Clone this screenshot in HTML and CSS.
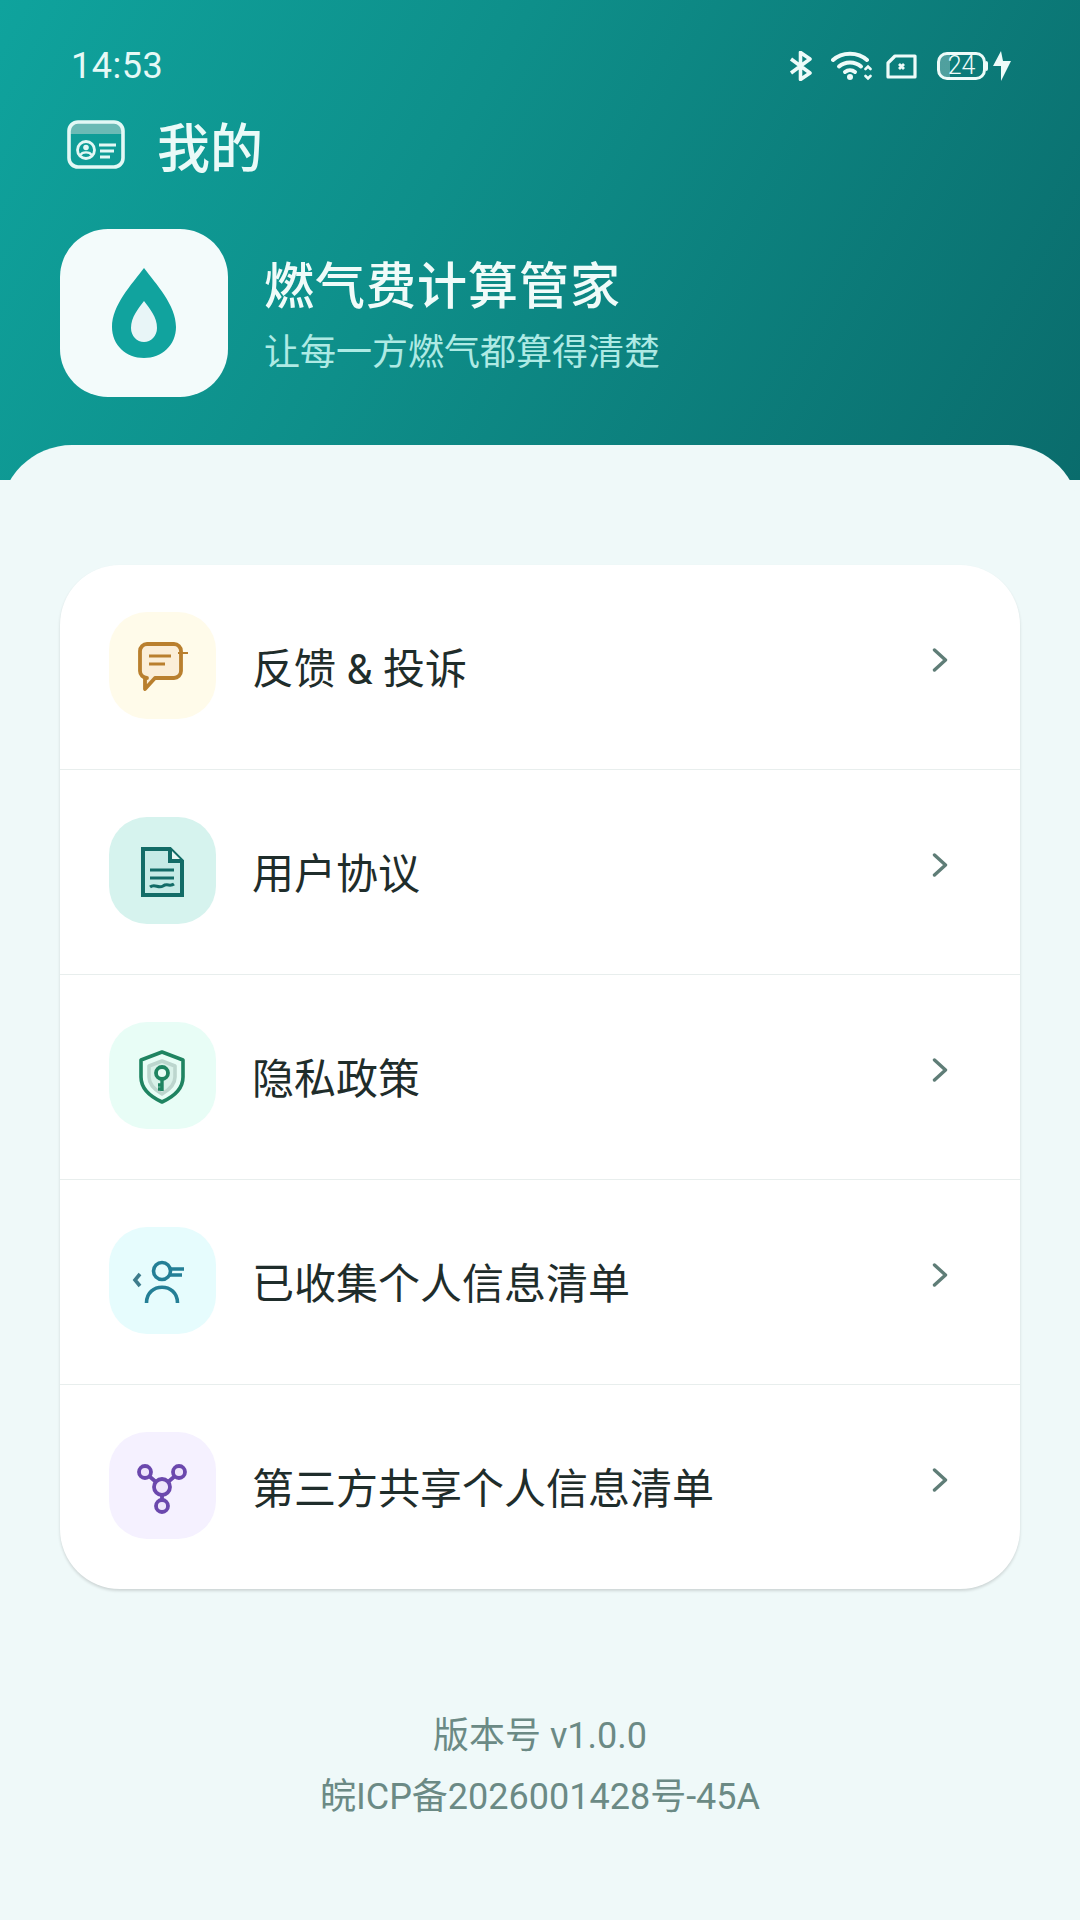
FILE: index.html
```html
<!DOCTYPE html>
<html lang="zh-CN">
<head>
    <meta charset="UTF-8">
    <meta name="viewport" content="width=device-width, initial-scale=1.0">
    <title>我的</title>
    <link rel="stylesheet" href="styles.css">
</head>
<body>
    <header class="header">
        <div class="status-bar">
            <span class="time">14:53</span>
            <div class="status-icons">
                <svg class="icon-bt" width="24" height="30" viewBox="0 0 24 30" fill="none" stroke="#eefbf9" stroke-width="3.6" stroke-linejoin="round"><path d="M2 8 L21 22 L11.5 28.5 V1.5 L21 8 L2 22"/></svg>
                <svg class="icon-wifi" width="41" height="30" viewBox="0 0 41 30" fill="none" stroke="#eefbf9" stroke-width="4" stroke-linecap="round"><path d="M2 9 C11 0.5 27 0.5 36 9"/><path d="M8 15.5 C14 10 24 10 30 15.5"/><path d="M14 21 C17 18.5 21 18.5 24 21"/><circle cx="19" cy="26" r="3" fill="#eefbf9" stroke="none"/><path d="M34.5 18 L37 15.5 L39.5 18 M34.5 25 L37 27.5 L39.5 25" stroke-width="2.6"/></svg>
                <svg class="icon-sim" width="31" height="25" viewBox="0 0 31 25" fill="none" stroke="#eefbf9" stroke-width="3.2"><path d="M9 2 H29 V23 H2 V9 Z" stroke-linejoin="round"/><path d="M13 10 L18 15 M18 10 L13 15" stroke-width="2.8"/></svg>
                <div class="battery"><span>24</span></div>
                <svg class="icon-bolt" width="18" height="30" viewBox="0 0 18 30" fill="#eefbf9"><path d="M8 0 L0 15 H8 V30 L18 10 H10 Z"/></svg>
            </div>
        </div>

        <div class="title-row">
            <svg width="58" height="49" viewBox="0 0 58 49" fill="none">
                <path d="M2 14 V10 A8 8 0 0 1 10 2 H48 A8 8 0 0 1 56 10 V14 Z" fill="#6bbab5"/>
                <rect x="2" y="2" width="54" height="45" rx="9" stroke="#e3f8f5" stroke-width="3.6"/>
                <circle cx="19" cy="30" r="8.5" stroke="#e3f8f5" stroke-width="2.8"/>
                <circle cx="19" cy="27.5" r="2.8" fill="#e3f8f5"/>
                <path d="M13.5 35 C15 31.5 23 31.5 24.5 35" stroke="#e3f8f5" stroke-width="2.4"/>
                <path d="M32 25 H49 M33 31 H47 M33 37 H43" stroke="#e3f8f5" stroke-width="2.8"/>
            </svg>
            <h1 class="page-title">我的</h1>
        </div>

        <div class="brand">
            <div class="brand-logo">
                <svg width="64" height="92" viewBox="0 0 64 92">
                    <path d="M32 1 C44 17 64 38 64 60 C64 78 50 91 32 91 C14 91 0 78 0 60 C0 38 20 17 32 1 Z" fill="#11a39e"/>
                    <path d="M32 34 C38 42 45 50 45 61 C45 69 39 75 32 75 C25 75 19 69 19 61 C19 50 26 42 32 34 Z" fill="#e8f5f7"/>
                </svg>
            </div>
            <div class="brand-text">
                <div class="brand-name">燃气费计算管家</div>
                <div class="brand-slogan">让每一方燃气都算得清楚</div>
            </div>
        </div>
    </header>

    <main class="sheet">
        <section class="menu-card">
            <div class="menu-row">
                <div class="menu-icon tile-amber">
                    <svg width="108" height="108" viewBox="0 0 108 108" fill="#fbeed8" stroke="#b97f2e" stroke-width="3.8" stroke-linejoin="round"><path d="M39 31 H66 A7 7 0 0 1 73 38 V58 A7 7 0 0 1 66 65 H47 L37 76 V65 H39 A7 7 0 0 1 32 58 V38 A7 7 0 0 1 39 31 Z"/><path d="M41 43 H63 M41 51 H57" fill="none" stroke-width="3"/><path d="M70 40 H80" fill="none" stroke-width="2"/></svg>
                </div>
                <div class="menu-label">反馈 &amp; 投诉</div>
                <svg class="chevron" width="16" height="24" viewBox="0 0 16 24" fill="none" stroke="#5f7d77" stroke-width="3.4" stroke-linecap="round" stroke-linejoin="round"><path d="M2.5 2 L13.5 12 L2.5 22"/></svg>
            </div>
            <div class="menu-row">
                <div class="menu-icon tile-teal">
                    <svg width="108" height="108" viewBox="0 0 108 108" fill="#c6ebe6" stroke="#136c67" stroke-width="4" stroke-linejoin="miter"><path d="M35 31 H62 L74 43 V77 H35 Z"/><path d="M62 31 V43 H74" fill="#e8f8f5"/><path d="M42 52 H66 M42 60 H66" fill="none" stroke-width="3"/><path d="M42 69 C47 65 50 71 55 68 C59 65 62 69 66 66" fill="none" stroke-width="3"/></svg>
                </div>
                <div class="menu-label">用户协议</div>
                <svg class="chevron" width="16" height="24" viewBox="0 0 16 24" fill="none" stroke="#5f7d77" stroke-width="3.4" stroke-linecap="round" stroke-linejoin="round"><path d="M2.5 2 L13.5 12 L2.5 22"/></svg>
            </div>
            <div class="menu-row">
                <div class="menu-icon tile-mint">
                    <svg width="108" height="108" viewBox="0 0 108 108" fill="none" stroke="#1f8461" stroke-width="3.6" stroke-linejoin="round"><path d="M54 29 L75 37 V54 C75 66 65 74 54 79 C43 74 33 66 33 54 V37 Z"/><path d="M54 38 L67 43 V54 C67 62 61 67 54 71 C47 67 41 62 41 54 V43 Z" stroke="#bcd6ce" fill="#d9f1e9"/><circle cx="54" cy="50" r="6" fill="#e8fdf6" stroke-width="3.8"/><path d="M54 56 V68 M54 62 H50 M54 66 H50" stroke-width="3.4"/></svg>
                </div>
                <div class="menu-label">隐私政策</div>
                <svg class="chevron" width="16" height="24" viewBox="0 0 16 24" fill="none" stroke="#5f7d77" stroke-width="3.4" stroke-linecap="round" stroke-linejoin="round"><path d="M2.5 2 L13.5 12 L2.5 22"/></svg>
            </div>
            <div class="menu-row">
                <div class="menu-icon tile-cyan">
                    <svg width="108" height="108" viewBox="0 0 108 108" fill="none" stroke="#247f96" stroke-width="3.6"><circle cx="54" cy="43" r="8.5"/><path d="M62 41 H76 M62 47 H74"/><path d="M38.5 75 C38.5 54 69.5 54 69.5 75"/><path d="M32 46 L27 52 L32 58" stroke="#3e7c8c"/></svg>
                </div>
                <div class="menu-label">已收集个人信息清单</div>
                <svg class="chevron" width="16" height="24" viewBox="0 0 16 24" fill="none" stroke="#5f7d77" stroke-width="3.4" stroke-linecap="round" stroke-linejoin="round"><path d="M2.5 2 L13.5 12 L2.5 22"/></svg>
            </div>
            <div class="menu-row">
                <div class="menu-icon tile-violet">
                    <svg width="108" height="108" viewBox="0 0 108 108" fill="#eee5fb" stroke="#6b48ad" stroke-width="3.8"><path d="M41 43 L48 49 M67 43 L60 49 M54 62 V67" fill="none"/><circle cx="37" cy="39" r="6"/><circle cx="71" cy="39" r="6"/><circle cx="54" cy="54" r="8"/><circle cx="54" cy="73" r="6"/></svg>
                </div>
                <div class="menu-label">第三方共享个人信息清单</div>
                <svg class="chevron" width="16" height="24" viewBox="0 0 16 24" fill="none" stroke="#5f7d77" stroke-width="3.4" stroke-linecap="round" stroke-linejoin="round"><path d="M2.5 2 L13.5 12 L2.5 22"/></svg>
            </div>
        </section>

        <footer class="footer">
            <div>版本号 v1.0.0</div>
            <div>皖ICP备2026001428号-45A</div>
        </footer>
    </main>
</body>
</html>
```

FILE: styles.css
```css
* {
    box-sizing: border-box;
}
body {
    margin: 0;
    min-height: 100vh;
    background: #eff9f9;
    font-family: Roboto, "Noto Sans CJK SC", sans-serif;
}
.header {
    height: 480px;
    padding: 46px 69px 0 60px;
    background: linear-gradient(118deg, #0fa39d 0%, #0e8f8a 40%, #0a6c6c 100%);
    color: #fff;
}
.status-bar {
    display: flex;
    align-items: center;
    justify-content: space-between;
    height: 40px;
    padding-left: 11px;
}
.time {
    font-size: 36px;
    font-weight: 400;
    letter-spacing: 0.5px;
    color: #e6f9f6;
}
.status-icons {
    display: flex;
    align-items: center;
}
.icon-wifi {
    margin-left: 18px;
}
.icon-sim {
    margin-left: 14px;
}
.battery {
    position: relative;
    width: 49px;
    height: 28px;
    margin-left: 20px;
    border: 3px solid #eefbf9;
    border-radius: 10px;
    background: linear-gradient(90deg, rgba(255, 255, 255, 0.28) 24%, transparent 24%);
    color: #eefbf9;
    font-size: 25px;
    font-weight: 300;
    line-height: 22px;
    text-align: center;
}
.battery::after {
    content: "";
    position: absolute;
    right: -5px;
    top: 6px;
    width: 2px;
    height: 10px;
    border-radius: 0 3px 3px 0;
    background: #eefbf9;
}
.icon-bolt {
    margin-left: 7px;
}
.title-row {
    display: flex;
    align-items: center;
    gap: 32px;
    margin-top: 34px;
    padding-left: 7px;
    height: 49px;
}
.page-title {
    margin: 0;
    font-size: 53px;
    font-weight: 500;
    color: #eafaf8;
}
.brand {
    display: flex;
    align-items: center;
    gap: 36px;
    margin-top: 60px;
}
.brand-logo {
    display: flex;
    align-items: center;
    justify-content: center;
    width: 168px;
    height: 168px;
    border-radius: 48px;
    background: #f3fbfb;
}
.brand-text {
    display: flex;
    flex-direction: column;
    gap: 9px;
    padding-top: 6px;
}
.brand-name {
    font-size: 50px;
    font-weight: 500;
    line-height: 64px;
    letter-spacing: 1px;
    color: #f0fbf9;
}
.brand-slogan {
    font-size: 36px;
    line-height: 50px;
    color: #aeeae4;
}
.sheet {
    margin-top: -35px;
    padding: 120px 60px 0;
    border-radius: 72px 72px 0 0;
    background: #eff9f9;
}
.menu-card {
    border-radius: 60px;
    background: #fff;
    box-shadow: 0 2px 3px rgba(0, 0, 0, 0.14);
}
.menu-row {
    display: flex;
    align-items: center;
    height: 205px;
    padding: 0 72px 0 49px;
    border-bottom: 1px solid #e8eeed;
}
.menu-row:last-child {
    height: 204px;
    border-bottom: none;
}
.menu-icon {
    flex: none;
    width: 107px;
    height: 107px;
    margin-top: -3px;
    border-radius: 38px;
}
.menu-icon svg {
    display: block;
    margin: 1px 0 0 -1px;
}
.tile-amber {
    background: #fffbea;
}
.tile-teal {
    background: #d6f3ee;
}
.tile-mint {
    background: #e8fdf6;
}
.tile-cyan {
    background: #e6fcfd;
}
.tile-violet {
    background: #f5f1ff;
}
.menu-label {
    flex: 1;
    margin-left: 36px;
    margin-bottom: 3px;
    font-size: 42px;
    color: #1f2d2b;
}
.chevron {
    margin-bottom: 14px;
}
.footer {
    margin-top: 117px;
    font-size: 36px;
    line-height: 61px;
    text-align: center;
    color: #6b8a85;
}
```
